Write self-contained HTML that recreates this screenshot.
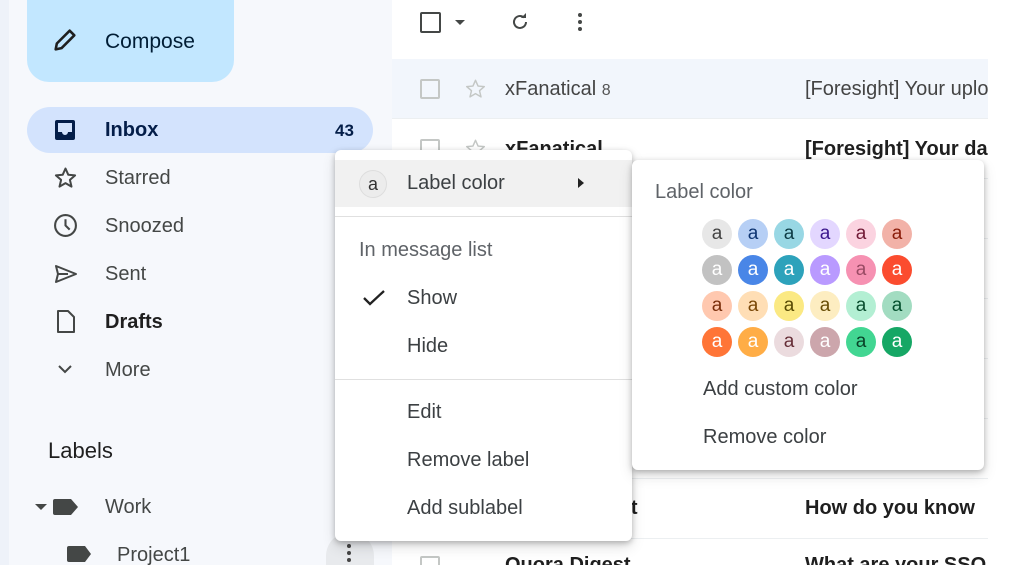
<!DOCTYPE html>
<html><head><style>
*{margin:0;padding:0;box-sizing:border-box}
html,body{width:1024px;height:565px;overflow:hidden}
body{font-family:"Liberation Sans",Arial,sans-serif;background:#fff;color:#1f1f1f}
#w{position:relative;width:1024px;height:565px;overflow:hidden}
.abs{position:absolute}
.side{left:0;top:0;width:392px;height:565px;background:#f6f8fc}
.strip{left:0;top:0;width:9px;height:565px;background:#eef2f9}
.compose{left:27px;top:0;width:207px;height:82px;background:#c2e7ff;border-radius:0 0 22px 22px;}
.nav{font-size:20px;color:#444746}
.main{left:392px;top:0;width:596px;height:565px;background:#fff}
.row{left:392px;width:596px;height:60px;border-bottom:1px solid #eceff1;font-size:20px}
.menu{background:#fff;border-radius:6px;box-shadow:0 2px 6px rgba(0,0,0,.25),0 6px 14px rgba(0,0,0,.12)}
.mi{position:absolute;font-size:20px;color:#3c4043}
.sw{position:absolute;width:30px;height:30px;border-radius:50%;text-align:center;line-height:29px;font-size:19px}
</style></head><body><div id="w">
<div class="abs side"></div>
<div class="abs strip"></div>
<div class="abs compose"></div>
<svg class="abs" style="left:50px;top:26px" width="30" height="28" viewBox="0 0 24 24"><path d="M4 20l1-5L16 4l4 4L9 19z" fill="none" stroke="#1f1f1f" stroke-width="2.2" stroke-linejoin="round"/></svg>
<div class="abs" style="left:105px;top:30px;font-size:21px;color:#001d35">Compose</div>
<div class="abs" style="left:27px;top:107px;width:346px;height:46px;background:#d3e3fd;border-radius:23px"></div>
<svg class="abs" style="left:54px;top:119px" width="22" height="22" viewBox="0 0 22 22"><rect x="1" y="1" width="20" height="20" rx="2" fill="#041e49"/><path d="M4 4h14v9h-4a3 3 0 0 1-6 0H4z" fill="#d3e3fd"/></svg>
<div class="abs" style="left:105px;top:119px;font-size:20px;font-weight:bold;color:#041e49">Inbox</div>
<div class="abs" style="left:335px;top:121px;font-size:17px;font-weight:bold;color:#041e49">43</div>
<svg class="abs" style="left:53px;top:166px" width="25" height="24" viewBox="0 0 24 24"><path d="M12 2.5l2.8 6.3 6.8.6-5.2 4.5 1.6 6.7L12 17.1l-6 3.5 1.6-6.7-5.2-4.5 6.8-.6z" fill="none" stroke="#444746" stroke-width="2" stroke-linejoin="round"/></svg>
<div class="abs nav" style="left:105px;top:167px">Starred</div>
<svg class="abs" style="left:53px;top:213px" width="25" height="25" viewBox="0 0 24 24"><circle cx="12" cy="12" r="10" fill="none" stroke="#444746" stroke-width="2"/><path d="M12 6v6l4 4" fill="none" stroke="#444746" stroke-width="2"/></svg>
<div class="abs nav" style="left:105px;top:215px">Snoozed</div>
<svg class="abs" style="left:54px;top:264px" width="24" height="20" viewBox="0 0 24 20"><path d="M2 2l20 8-20 8 2-8z" fill="none" stroke="#444746" stroke-width="2" stroke-linejoin="round"/><path d="M4 10h10" stroke="#444746" stroke-width="2"/></svg>
<div class="abs nav" style="left:105px;top:263px">Sent</div>
<svg class="abs" style="left:56px;top:309px" width="20" height="25" viewBox="0 0 20 25"><path d="M2 2h10l6 6v15H2z" fill="none" stroke="#444746" stroke-width="2" stroke-linejoin="round"/></svg>
<div class="abs" style="left:105px;top:311px;font-size:20px;font-weight:bold;color:#1f1f1f">Drafts</div>
<svg class="abs" style="left:57px;top:363px" width="16" height="12" viewBox="0 0 16 12"><path d="M2 3l6 6 6-6" fill="none" stroke="#444746" stroke-width="2"/></svg>
<div class="abs nav" style="left:105px;top:359px">More</div>
<div class="abs" style="left:48px;top:438px;font-size:22px;color:#1f1f1f">Labels</div>
<svg class="abs" style="left:34px;top:497px" width="46" height="20" viewBox="0 0 46 20"><path d="M1 7h12l-6 6z" fill="#444746"/><path d="M21 2h16l7 8-7 8H21a2 2 0 0 1-2-2V4a2 2 0 0 1 2-2z" fill="#444746"/></svg>
<div class="abs nav" style="left:105px;top:496px">Work</div>
<svg class="abs" style="left:66px;top:544px" width="26" height="20" viewBox="0 0 26 20"><path d="M3 2h16l6 8-6 8H3a2 2 0 0 1-2-2V4a2 2 0 0 1 2-2z" fill="#444746"/></svg>
<div class="abs nav" style="left:117px;top:544px">Project1</div>
<div class="abs" style="left:326px;top:532px;width:48px;height:33px;border-radius:24px 24px 0 0;background:#e8eaed"></div>
<div class="abs" style="left:347px;top:544px;width:4px;height:4px;border-radius:2px;background:#444;box-shadow:0 7px 0 #444,0 14px 0 #444"></div>

<div class="abs main"></div>
<div class="abs" style="left:420px;top:12px;width:21px;height:21px;border:2px solid #444746;border-radius:2px"></div>
<div class="abs" style="left:455px;top:20px;border:5px solid transparent;border-top:5px solid #444746"></div>
<svg class="abs" style="left:510px;top:12px" width="20" height="20" viewBox="0 0 20 20"><path d="M16 10a6 6 0 1 1-2-4.5" fill="none" stroke="#444746" stroke-width="2"/><path d="M11 6h5V1z" fill="#444746"/></svg>
<div class="abs" style="left:578px;top:13px;width:4px;height:4px;border-radius:2px;background:#444746;box-shadow:0 7px 0 #444746,0 14px 0 #444746"></div>
<div class="abs row" style="top:59px;background:#f2f6fc"></div>
<div class="abs row" style="top:119px"></div>
<div class="abs row" style="top:179px"></div>
<div class="abs row" style="top:239px"></div>
<div class="abs row" style="top:299px"></div>
<div class="abs row" style="top:359px"></div>
<div class="abs row" style="top:419px"></div>
<div class="abs row" style="top:479px"></div>
<div class="abs row" style="top:539px;height:26px;border-bottom:0"></div>
<div class="abs" style="left:420px;top:79px;width:20px;height:20px;border:2px solid #c4c7c5;border-radius:2px"></div>
<svg class="abs" style="left:464px;top:78px" width="23" height="22" viewBox="0 0 24 24"><path d="M12 2.5l2.8 6.3 6.8.6-5.2 4.5 1.6 6.7L12 17.1l-6 3.5 1.6-6.7-5.2-4.5 6.8-.6z" fill="none" stroke="#c4c7c5" stroke-width="1.6" stroke-linejoin="round"/></svg>
<div class="abs" style="left:505px;top:78px;font-size:20px;color:#444">xFanatical <span style="font-size:16px;color:#555">8</span></div>
<div class="abs" style="left:805px;top:78px;width:183px;overflow:hidden;white-space:nowrap;font-size:20px;color:#444">[Foresight] Your upload</div>
<div class="abs" style="left:420px;top:139px;width:20px;height:20px;border:2px solid #c4c7c5;border-radius:2px"></div>
<svg class="abs" style="left:464px;top:138px" width="23" height="22" viewBox="0 0 24 24"><path d="M12 2.5l2.8 6.3 6.8.6-5.2 4.5 1.6 6.7L12 17.1l-6 3.5 1.6-6.7-5.2-4.5 6.8-.6z" fill="none" stroke="#c4c7c5" stroke-width="1.6" stroke-linejoin="round"/></svg>
<div class="abs" style="left:505px;top:138px;font-size:20px;font-weight:bold">xFanatical</div>
<div class="abs" style="left:805px;top:138px;width:183px;overflow:hidden;white-space:nowrap;font-size:20px;font-weight:bold">[Foresight] Your daily</div>
<div class="abs" style="left:512px;top:497px;font-size:20px;font-weight:bold">Quora Digest</div>
<div class="abs" style="left:805px;top:497px;width:183px;overflow:hidden;white-space:nowrap;font-size:20px;font-weight:bold">How do you know</div>
<div class="abs" style="left:420px;top:556px;width:20px;height:20px;border:2px solid #c4c7c5;border-radius:2px"></div>
<div class="abs" style="left:505px;top:554px;font-size:20px;font-weight:bold">Quora Digest</div>
<div class="abs" style="left:805px;top:554px;width:183px;overflow:hidden;white-space:nowrap;font-size:20px;font-weight:bold">What are your SSO</div>

<div class="abs menu" style="left:335px;top:150px;width:297px;height:391px"></div>
<div class="abs" style="left:335px;top:160px;width:297px;height:47px;background:#f1f1f1"></div>
<div class="abs" style="left:359px;top:170px;width:28px;height:28px;border-radius:50%;background:#ececec;border:1px solid #ddd;text-align:center;line-height:26px;font-size:18px;color:#333">a</div>
<div class="mi" style="left:407px;top:172px">Label color</div>
<div class="abs" style="left:578px;top:178px;border:5px solid transparent;border-left:6px solid #222;border-right:0"></div>
<div class="abs" style="left:335px;top:216px;width:297px;height:1px;background:#e0e0e0"></div>
<div class="mi" style="left:359px;top:239px;color:#5f6368">In message list</div>
<svg class="abs" style="left:362px;top:288px" width="24" height="20" viewBox="0 0 24 20"><path d="M2 10l6 6L22 3" fill="none" stroke="#222" stroke-width="2.3"/></svg>
<div class="mi" style="left:407px;top:287px">Show</div>
<div class="mi" style="left:407px;top:335px">Hide</div>
<div class="abs" style="left:335px;top:379px;width:297px;height:1px;background:#e0e0e0"></div>
<div class="mi" style="left:407px;top:401px">Edit</div>
<div class="mi" style="left:407px;top:449px">Remove label</div>
<div class="mi" style="left:407px;top:497px">Add sublabel</div>

<div class="abs menu" style="left:632px;top:160px;width:352px;height:310px"></div>
<div class="mi" style="left:655px;top:181px;color:#5f6368">Label color</div>
<div class="sw" style="left:702px;top:219px;background:#e7e7e7;color:#444">a</div>
<div class="sw" style="left:738px;top:219px;background:#b6cff5;color:#0d3472">a</div>
<div class="sw" style="left:774px;top:219px;background:#98d7e4;color:#0d3b44">a</div>
<div class="sw" style="left:810px;top:219px;background:#e3d7ff;color:#3d188e">a</div>
<div class="sw" style="left:846px;top:219px;background:#fbd3e0;color:#711a36">a</div>
<div class="sw" style="left:882px;top:219px;background:#f2b2a8;color:#8a1c0a">a</div>
<div class="sw" style="left:702px;top:255px;background:#c2c2c2;color:#fff">a</div>
<div class="sw" style="left:738px;top:255px;background:#4986e7;color:#fff">a</div>
<div class="sw" style="left:774px;top:255px;background:#2da2bb;color:#fff">a</div>
<div class="sw" style="left:810px;top:255px;background:#b99aff;color:#fff">a</div>
<div class="sw" style="left:846px;top:255px;background:#f691b2;color:#994a64">a</div>
<div class="sw" style="left:882px;top:255px;background:#fb4c2f;color:#fff">a</div>
<div class="sw" style="left:702px;top:291px;background:#ffc8af;color:#7a2e0b">a</div>
<div class="sw" style="left:738px;top:291px;background:#ffdeb5;color:#7a4706">a</div>
<div class="sw" style="left:774px;top:291px;background:#fbe983;color:#594c05">a</div>
<div class="sw" style="left:810px;top:291px;background:#fdedc1;color:#684e07">a</div>
<div class="sw" style="left:846px;top:291px;background:#b3efd3;color:#0b4f30">a</div>
<div class="sw" style="left:882px;top:291px;background:#a2dcc1;color:#04502e">a</div>
<div class="sw" style="left:702px;top:327px;background:#ff7537;color:#fff">a</div>
<div class="sw" style="left:738px;top:327px;background:#ffad46;color:#fff">a</div>
<div class="sw" style="left:774px;top:327px;background:#ebdbde;color:#662e37">a</div>
<div class="sw" style="left:810px;top:327px;background:#cca6ac;color:#fff">a</div>
<div class="sw" style="left:846px;top:327px;background:#42d692;color:#094228">a</div>
<div class="sw" style="left:882px;top:327px;background:#16a765;color:#fff">a</div>
<div class="mi" style="left:703px;top:378px">Add custom color</div>
<div class="mi" style="left:703px;top:426px">Remove color</div>
</div></body></html>
